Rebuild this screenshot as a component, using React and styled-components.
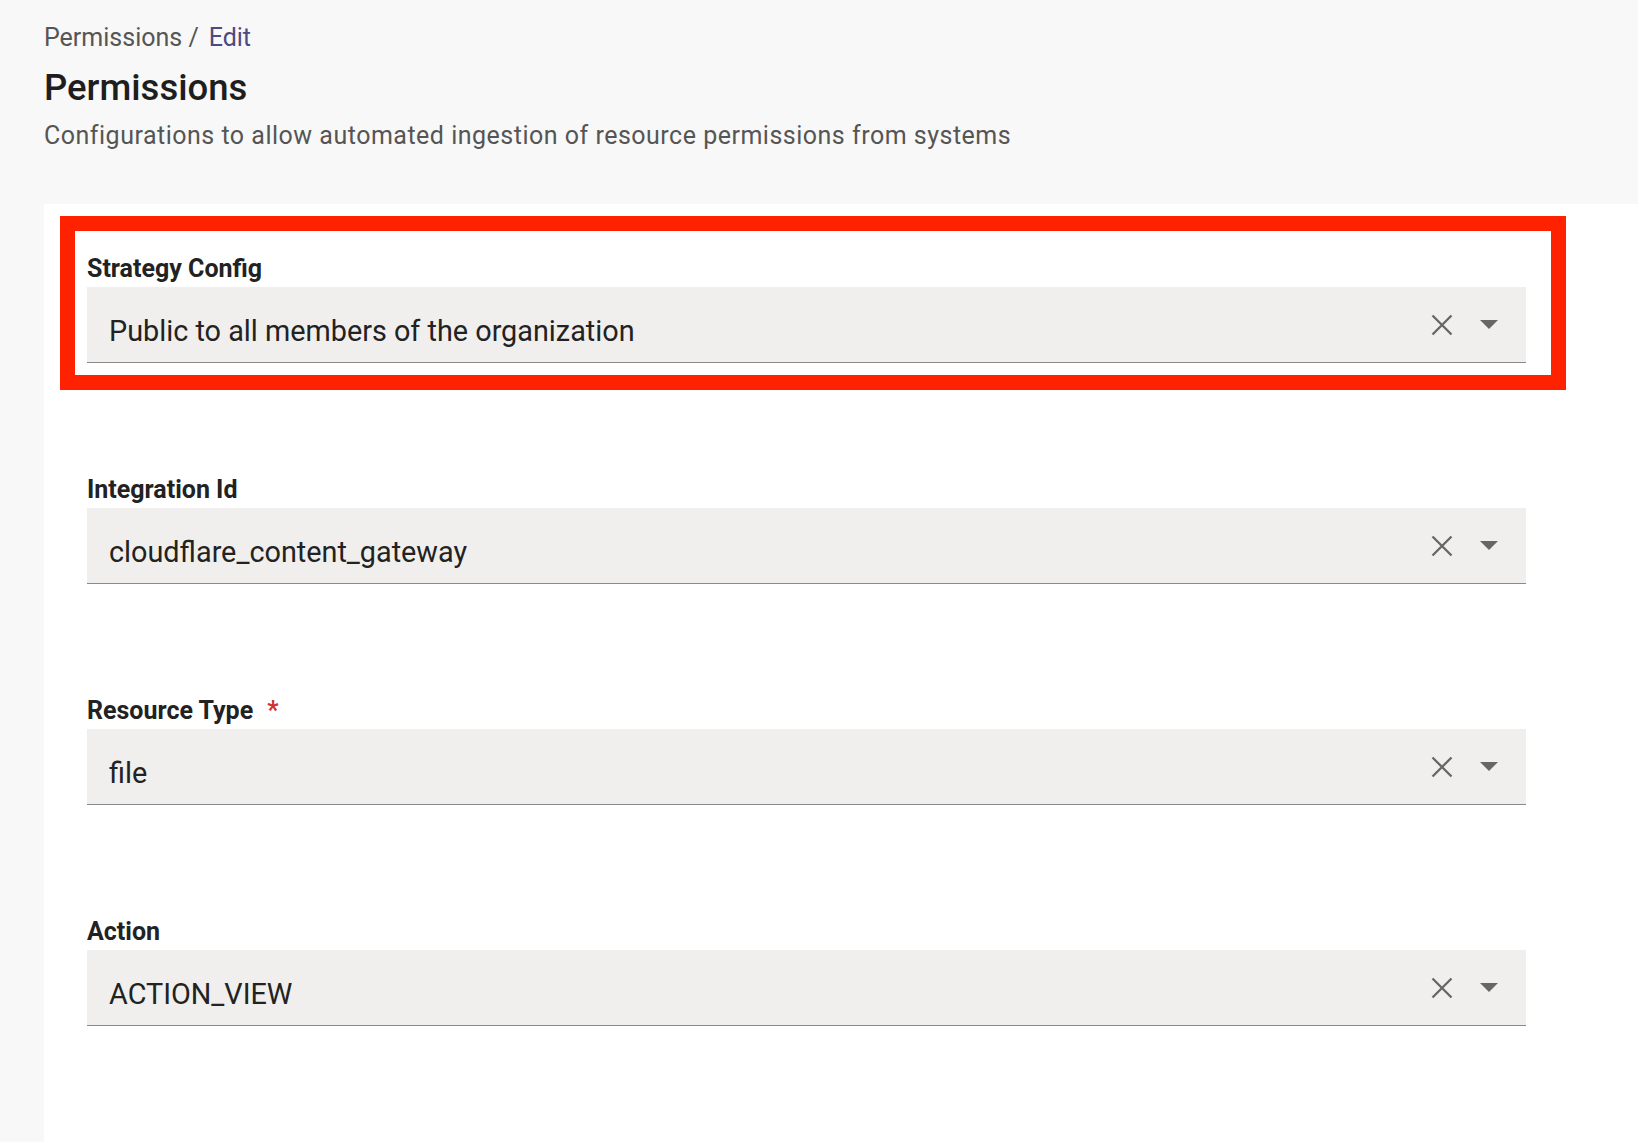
import React from 'react'
import styled, { createGlobalStyle } from 'styled-components'

const GlobalStyle = createGlobalStyle`
  html, body {
    margin: 0;
    padding: 0;
    background: #f8f8f8;
    font-family: Roboto, "Liberation Sans", sans-serif;
  }
`;

const Page = styled.div`
  min-height: 1142px;
  display: flex;
  flex-direction: column;
`;

const Header = styled.div`
  padding: 22px 0 0 44px;
  height: 204px;
  box-sizing: border-box;
`;

const Breadcrumb = styled.div`
  font-size: 25px;
  line-height: 32px;
`;

const Crumb = styled.span`
  color: ${p => (p.active ? '#4b4a82' : '#555')};
  margin-left: ${p => (p.active ? '10px' : '0')};
`;

const Title = styled.h1`
  margin: 13px 0 0;
  font-size: 36.5px;
  font-weight: 500;
  color: #1e1e1e;
  line-height: 42px;
`;

const Subtitle = styled.p`
  margin: 11px 0 0;
  font-size: 25px;
  color: #555;
  letter-spacing: 0.5px;
  line-height: 32px;
`;

const Panel = styled.div`
  flex: 1;
  margin-left: 44px;
  background: #fff;
`;

const Form = styled.form`
  display: flex;
  flex-direction: column;
  gap: 112px;
  padding: 50px 0 120px 43px;
  width: 1439px;
`;

// red outline around the first field, kept out of the flow spacing
const Highlight = styled.div`
  margin: -38px -40px -27px -27px;
  padding: 23px 25px 12px 12px;
  border: 15px solid #ff2200;
`;

const Field = styled.div`
  display: flex;
  flex-direction: column;
  gap: 4px;
`;

const Label = styled.label`
  font-size: 25px;
  font-weight: 700;
  color: #222;
  line-height: 29px;
`;

const Required = styled.span`
  color: #d32f2f;
  margin-left: 14px;
`;

const Select = styled.div`
  height: 76px;
  box-sizing: border-box;
  background: #f0efed;
  border-bottom: 1.5px solid #8a8a8a;
  display: flex;
  align-items: center;
  padding: 0 28px 0 22px;
`;

const Value = styled.span`
  flex: 1;
  font-size: 28.8px;
  color: #222;
  padding-top: 12px;
`;

const IconButton = styled.span`
  display: flex;
  align-items: center;
  justify-content: center;
  margin-left: ${p => p.gap || 0}px;
`;

const ClearIcon = () => (
  <svg width="22" height="22" viewBox="0 0 22 22">
    <path d="M1.5 1.5 L20.5 20.5 M20.5 1.5 L1.5 20.5" stroke="#666" strokeWidth="2.3" fill="none" />
  </svg>
);

const CaretIcon = () => (
  <svg width="18" height="9" viewBox="0 0 18 9">
    <path d="M0 0 L18 0 L9 9 Z" fill="#666" />
  </svg>
);

const SelectField = ({ label, value, required }) => (
  <Field>
    <Label>
      {label}
      {required && <Required>*</Required>}
    </Label>
    <Select>
      <Value>{value}</Value>
      <IconButton><ClearIcon /></IconButton>
      <IconButton gap={27}><CaretIcon /></IconButton>
    </Select>
  </Field>
);

export default function App() {
  return (
    <Page>
      <GlobalStyle />
      <Header>
        <Breadcrumb>
          <Crumb>Permissions /</Crumb>
          <Crumb active>Edit</Crumb>
        </Breadcrumb>
        <Title>Permissions</Title>
        <Subtitle>Configurations to allow automated ingestion of resource permissions from systems</Subtitle>
      </Header>
      <Panel>
        <Form>
          <Highlight>
            <SelectField label="Strategy Config" value="Public to all members of the organization" />
          </Highlight>
          <SelectField label="Integration Id" value="cloudflare_content_gateway" />
          <SelectField label="Resource Type" value="file" required />
          <SelectField label="Action" value="ACTION_VIEW" />
        </Form>
      </Panel>
    </Page>
  );
}
